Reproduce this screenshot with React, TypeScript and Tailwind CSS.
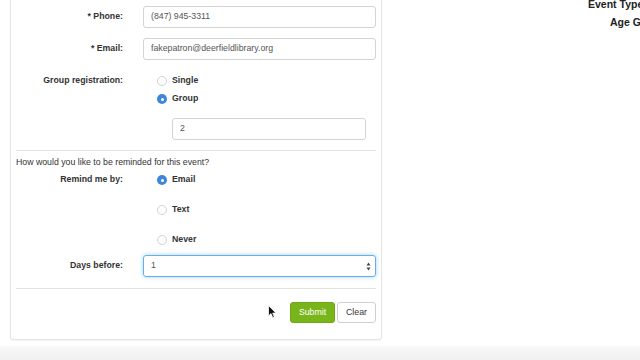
import React from "react";

function Radio({ checked, label }: { checked?: boolean; label: string }) {
  return (
    <div className="flex h-[18px] items-center pl-[14px]">
      {checked ? (
        <span className="flex h-[10px] w-[10px] items-center justify-center rounded-full bg-[#3c87de]">
          <span className="h-[3px] w-[3px] rounded-full bg-white" />
        </span>
      ) : (
        <span className="h-[10px] w-[10px] rounded-full border border-[#d2d2d2] bg-white" />
      )}
      <span className="ml-[5px] font-bold text-[#333]">{label}</span>
    </div>
  );
}

function Label({ children }: { children: React.ReactNode }) {
  return <div className="w-[107px] shrink-0 text-right font-bold text-[#333]">{children}</div>;
}

export default function App() {
  return (
    <div
      className="relative h-[360px] w-[640px] overflow-hidden bg-white text-[8.75px] text-[#333]"
      style={{ fontFamily: '"Liberation Sans", Arial, Helvetica, sans-serif' }}
    >
      <div className="flex">
        <div className="ml-[10px] w-[372px] shrink-0 rounded-b-[3px] border border-t-0 border-[#e4e4e4] px-[5px] pt-[6px] pb-[16px] shadow-[0_1px_1px_rgba(0,0,0,0.04)]">
          {/* Phone */}
          <div className="flex h-[22px] items-center">
            <Label>* Phone:</Label>
            <div className="ml-[20px] flex h-[22px] flex-1 items-center rounded-[3px] border border-[#d4d4d4] px-[7px] text-[#555]">
              (847) 945-3311
            </div>
          </div>
          {/* Email */}
          <div className="mt-[10px] flex h-[22px] items-center">
            <Label>* Email:</Label>
            <div className="ml-[20px] flex h-[22px] flex-1 items-center rounded-[3px] border border-[#d4d4d4] px-[7px] text-[#555]">
              fakepatron@deerfieldlibrary.org
            </div>
          </div>
          {/* Group registration */}
          <div className="mt-[12px] flex">
            <div className="flex h-[18px] items-center">
              <Label>Group registration:</Label>
            </div>
            <div className="ml-[20px] flex flex-col">
              <Radio label="Single" />
              <Radio checked label="Group" />
            </div>
          </div>
          <div className="ml-[156px] mt-[10px] flex h-[22px] w-[194px] items-center rounded-[3px] border border-[#d4d4d4] px-[7px] text-[#555]">
            2
          </div>
          <div className="mt-[10px] h-px bg-[#e2e2e2]" />
          <div className="mt-[3px] flex h-[17px] items-center text-[#333]">
            How would you like to be reminded for this event?
          </div>
          {/* Remind me by */}
          <div className="flex">
            <div className="flex h-[18px] items-center">
              <Label>Remind me by:</Label>
            </div>
            <div className="ml-[20px] flex flex-col gap-[12px]">
              <Radio checked label="Email" />
              <Radio label="Text" />
              <Radio label="Never" />
            </div>
          </div>
          {/* Days before */}
          <div className="mt-[6px] flex h-[22px] items-center">
            <Label>Days before:</Label>
            <div className="ml-[20px] flex h-[22px] flex-1 items-center justify-between rounded-[3px] border border-[#66afe9] pl-[7px] pr-[4px] text-[#555] shadow-[0_0_4px_rgba(102,175,233,0.6)]">
              <span>1</span>
              <svg width="5" height="9" viewBox="0 0 5 9">
                <path d="M2.5 0.5 L4.5 3.5 L0.5 3.5 Z" fill="#444" />
                <path d="M2.5 8.5 L4.5 5.5 L0.5 5.5 Z" fill="#444" />
              </svg>
            </div>
          </div>
          <div className="mt-[11px] h-px bg-[#e2e2e2]" />
          <div className="mt-[13px] flex justify-end gap-[2px]">
            <div className="flex h-[21px] w-[45px] items-center justify-center rounded-[3px] border border-[#6ea814] bg-[#78b51a] text-white">
              Submit
            </div>
            <div className="flex h-[21px] w-[39px] items-center justify-center rounded-[3px] border border-[#cfcfcf] bg-white text-[#333]">
              Clear
            </div>
          </div>
        </div>
        <div className="flex flex-col whitespace-nowrap text-[10.5px] font-bold text-[#222]">
          <div className="ml-[206px] mt-[-3px] leading-[14px]">Event Type:</div>
          <div className="ml-[228px] mt-[4px] leading-[14px]">Age Group:</div>
        </div>
      </div>
      <div className="mt-[6px] h-[20px] bg-gradient-to-b from-[#f8f8f8] to-[#ededed]" />
      <svg
        className="absolute left-[268px] top-[305px]"
        width="9"
        height="14"
        viewBox="0 0 9 14"
      >
        <path d="M0.5 0.5 L0.5 11 L3 8.6 L4.8 12.8 L6.4 12.1 L4.7 8.1 L8 8.1 Z" fill="#111" stroke="#fff" strokeWidth="0.8" />
      </svg>
    </div>
  );
}
